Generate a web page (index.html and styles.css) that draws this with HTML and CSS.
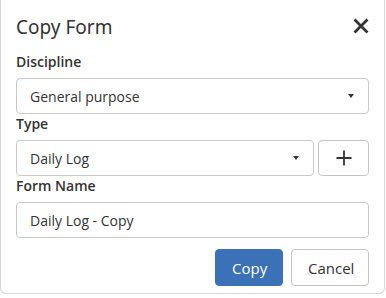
FILE: index.html
```html
<!DOCTYPE html>
<html>
<head>
<meta charset="utf-8">
<link rel="stylesheet" href="styles.css">
</head>
<body>
<div class="dialog">
  <div class="header">
    <h1 class="title">Copy Form</h1>
    <button class="close" aria-label="Close">
      <svg width="16" height="16" viewBox="0 0 16 16"><path d="M1.5 1.5 L14.5 14.5 M14.5 1.5 L1.5 14.5" stroke="#333" stroke-width="2.8" stroke-linecap="butt" fill="none"/></svg>
    </button>
  </div>
  <label class="label">Discipline</label>
  <div class="select">
    <span>General purpose</span>
    <span class="caret"></span>
  </div>
  <label class="label">Type</label>
  <div class="row">
    <div class="select grow">
      <span>Daily Log</span>
      <span class="caret"></span>
    </div>
    <button class="add" aria-label="Add">
      <svg width="16" height="16" viewBox="0 0 16 16"><path d="M8 0.5 V15.5 M0.5 8 H15.5" stroke="#333" stroke-width="1.8" fill="none"/></svg>
    </button>
  </div>
  <label class="label">Form Name</label>
  <div class="input">Daily Log - Copy</div>
  <div class="actions">
    <button class="btn primary">Copy</button>
    <button class="btn">Cancel</button>
  </div>
</div>
</body>
</html>
```

FILE: styles.css
```css
html, body {
  margin: 0;
  padding: 0;
  background: #ffffff;
}
body {
  font-family: "Open Sans", "Noto Sans", sans-serif;
  color: #333333;
}
.dialog {
  box-sizing: border-box;
  width: 385px;
  border: 1px solid #d6d6d6;
  border-top: none;
  border-radius: 0 0 6px 6px;
  padding: 12px 15px 7px 15px;
  display: flex;
  flex-direction: column;
}
.header {
  display: flex;
  align-items: center;
  justify-content: space-between;
  height: 28px;
  margin-bottom: 12px;
}
.title {
  margin: 0;
  font-family: "Noto Sans", "Open Sans", sans-serif;
  font-size: 19px;
  font-weight: 400;
  line-height: 28px;
  color: #333;
  padding-top: 1px;
}
.close {
  border: none;
  background: none;
  padding: 0;
  margin-right: 0;
  width: 16px;
  height: 16px;
  display: flex;
}
.label {
  display: block;
  font-size: 14px;
  font-weight: 600;
  line-height: 20px;
  margin-bottom: 6px;
}
.select, .input {
  box-sizing: border-box;
  height: 36px;
  border: 1px solid #c9c9c9;
  border-radius: 4px;
  padding: 0 14px 0 13px;
  display: flex;
  align-items: center;
  justify-content: space-between;
  font-size: 14px;
  color: #333;
  background: #fff;
}
.caret {
  width: 0;
  height: 0;
  border-left: 3.5px solid transparent;
  border-right: 3.5px solid transparent;
  border-top: 4px solid #333;
}
.row {
  display: flex;
  gap: 4px;
}
.grow {
  flex: 1;
}
.add {
  box-sizing: border-box;
  width: 51px;
  height: 36px;
  border: 1px solid #c4c4c4;
  border-radius: 4px;
  background: #fff;
  display: flex;
  align-items: center;
  justify-content: center;
  padding: 0;
}
.actions {
  display: flex;
  justify-content: flex-end;
  gap: 8px;
  margin-top: 11px;
}
.btn {
  box-sizing: border-box;
  height: 37px;
  border: 1px solid #c4c4c4;
  border-radius: 4px;
  background: #fff;
  font-family: "Open Sans", "Noto Sans", sans-serif;
  font-size: 15px;
  color: #333;
  padding: 0 16px;
}
.btn.primary {
  background: #3a71b7;
  border-color: #3a71b7;
  color: #fff;
  width: 68px;
}
.btn:not(.primary) {
  width: 78px;
}
```
